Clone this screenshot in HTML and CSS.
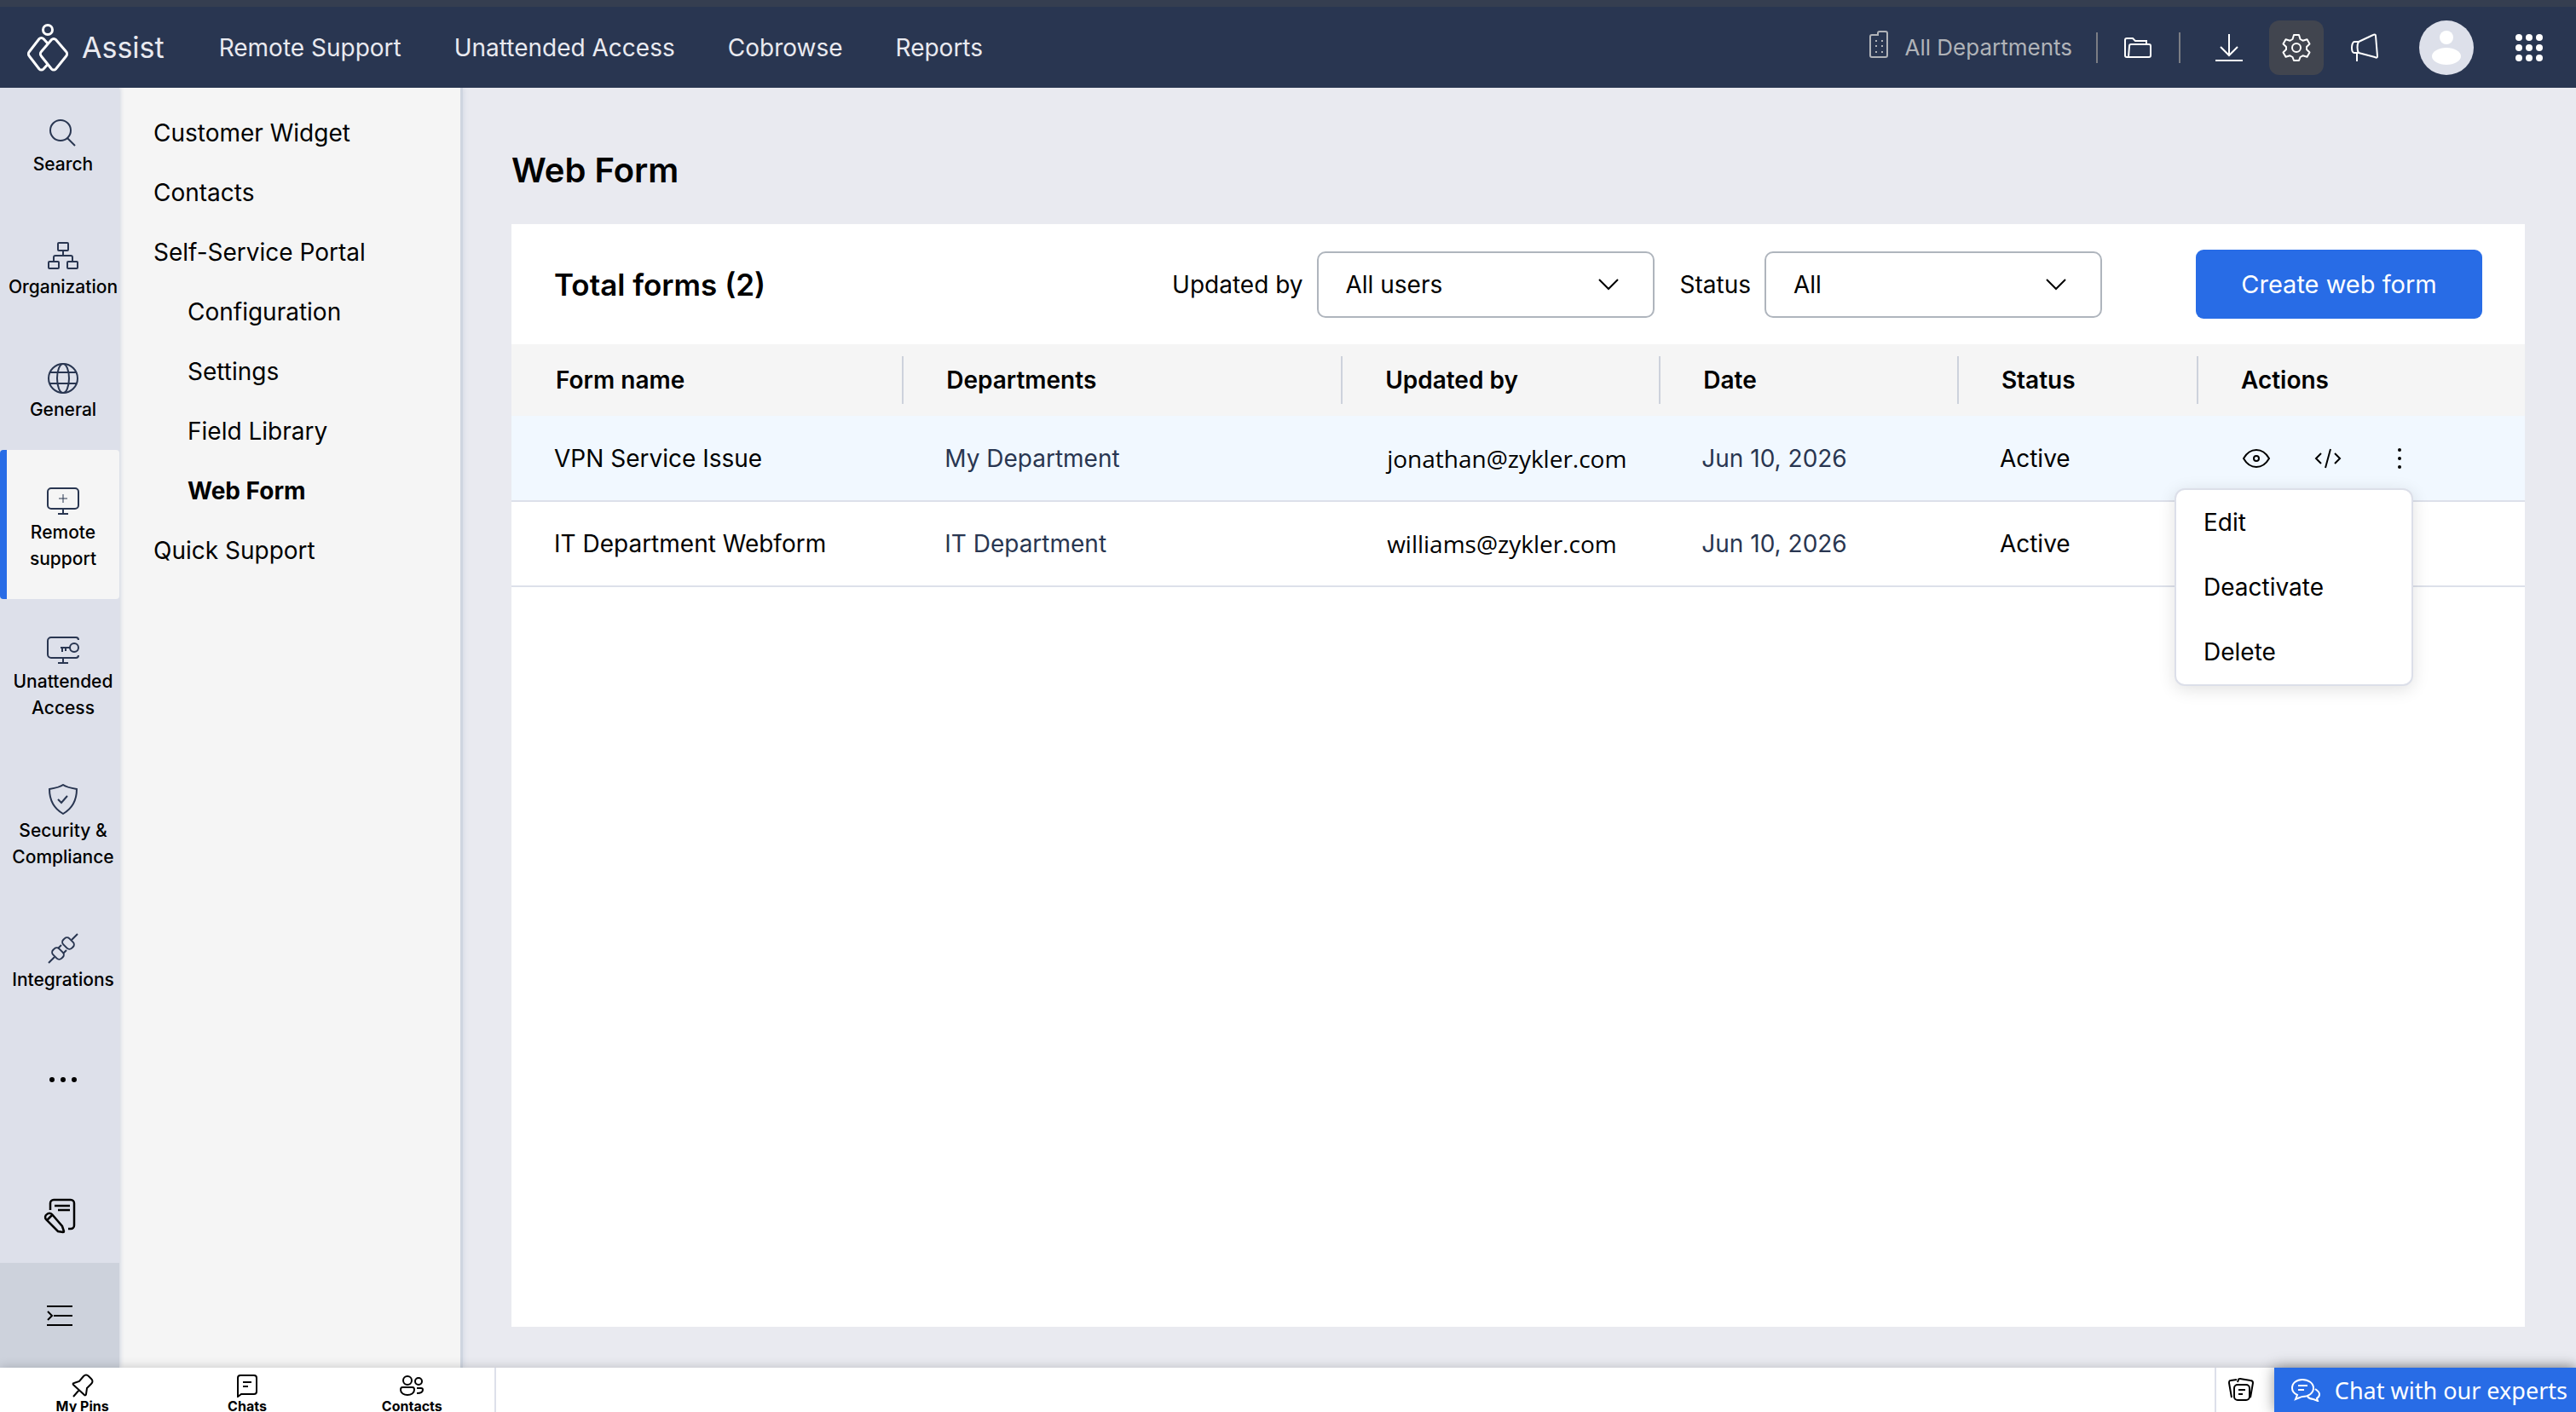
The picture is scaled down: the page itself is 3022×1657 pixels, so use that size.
FILE: index.html
```html
<!DOCTYPE html>
<html lang="en">
<head>
    <meta charset="UTF-8">
    <meta name="viewport" content="width=device-width, initial-scale=1.0">
    <title>Assist - Web Form</title>
    <link rel="stylesheet" href="styles.css">
</head>
<body>
    <!-- Top bar -->
    <header class="top-bar">
        <a class="brand" href="#">
            <svg width="48" height="58" viewBox="0 0 48 58" fill="none" stroke="#fff" stroke-width="3">
                <circle cx="24" cy="8" r="5.500"/>
                <path d="M24 24l-5-5.500a3.500 3.500 0 0 0-5 0L2.500 33.500a4 4 0 0 0 0 5.500L14 54a3.500 3.500 0 0 0 5 0l5-5.500"/>
                <path d="M28.500 19.500a3.500 3.500 0 0 1 5 0L45.500 33.500a4 4 0 0 1 0 5.500L33.500 54a3.500 3.500 0 0 1-5 0L16.500 39a4 4 0 0 1 0-5.500z"/>
            </svg>
            <span>Assist</span>
        </a>
        <nav class="main-nav">
            <a href="#">Remote Support</a>
            <a href="#">Unattended Access</a>
            <a href="#">Cobrowse</a>
            <a href="#">Reports</a>
        </nav>
        <div class="top-tools">
            <button class="dept-button">
                <svg width="24" height="34" viewBox="0 0 24 34" fill="none" stroke="currentColor" stroke-width="2">
                    <path d="M4 6h7V4a2 2 0 0 1 2-2h7a2 2 0 0 1 2 2v26a2 2 0 0 1-2 2H4a2 2 0 0 1-2-2V8a2 2 0 0 1 2-2"/>
                    <path d="M8 13h2M15 13h2M8 19h2M15 19h2M8 26h2M15 26h2"/>
                </svg>
                <span>All Departments</span>
            </button>
            <span class="tool-divider"></span>
            <button class="tool-button folder" aria-label="Files">
                <svg width="34" height="34" viewBox="0 0 34 34" fill="none" stroke="#fff" stroke-width="2">
                    <path d="M6 28H4a2 2 0 0 1-2-2V8a2 2 0 0 1 2-2h7l3 3h13v3"/>
                    <path d="M9 13h21a2 2 0 0 1 2 2v11a2 2 0 0 1-2 2H6l1-13a2 2 0 0 1 2-2z"/>
                </svg>
            </button>
            <span class="tool-divider"></span>
            <button class="tool-button download" aria-label="Download">
                <svg width="34" height="34" viewBox="0 0 34 34" fill="none" stroke="#fff" stroke-width="2">
                    <path d="M17 1v24M7 16l10 10 10-10M1 32h32"/>
                </svg>
            </button>
            <button class="tool-button selected" aria-label="Settings">
                <svg width="34" height="34" viewBox="0 0 34 34" fill="none" stroke="#fff" stroke-width="2" stroke-linejoin="round">
                    <path d="M14 2h6l1.500 5 3 1.700 5-1.500 3 5.300-3.500 3.500v3l3.500 3.500-3 5.300-5-1.500-3 1.700L20 32h-6l-1.500-4-3-1.700-5 1.500-3-5.300L5 19v-3l-3.500-3.500 3-5.300 5 1.500 3-1.700z"/>
                    <circle cx="17" cy="17" r="5"/>
                </svg>
            </button>
            <button class="tool-button" aria-label="Announcements">
                <svg width="34" height="34" viewBox="0 0 34 34" fill="none" stroke="#fff" stroke-width="2" stroke-linejoin="round">
                    <path d="M10 10L27 2c2-1 3 0 3 1l2 24c0 2-1 2-3 1L10 23H5c-2 0-3-3-3-6s1-7 3-7zM10 10c-2 3-2 10 0 13M8 23v10"/>
                </svg>
            </button>
            <button class="avatar" aria-label="Account">
                <svg width="64" height="64" viewBox="0 0 64 64">
                    <circle cx="32" cy="32" r="32" fill="#dde0ea"/>
                    <circle cx="32" cy="20" r="8" fill="#fff"/>
                    <ellipse cx="32" cy="42" rx="17" ry="10" fill="#fff"/>
                </svg>
            </button>
            <button class="apps" aria-label="Apps">
                <svg width="34" height="34" viewBox="0 0 34 34" fill="#fff">
                    <circle cx="5" cy="5" r="4"/><circle cx="17" cy="5" r="4"/><circle cx="29" cy="5" r="4"/>
                    <circle cx="5" cy="17" r="4"/><circle cx="17" cy="17" r="4"/><circle cx="29" cy="17" r="4"/>
                    <circle cx="5" cy="29" r="4"/><circle cx="17" cy="29" r="4"/><circle cx="29" cy="29" r="4"/>
                </svg>
            </button>
        </div>
    </header>

    <div class="workspace">
        <!-- Icon sidebar -->
        <nav class="side-bar">
            <a class="side-item" href="#">
                <svg class="side-icon" viewBox="0 0 36 36"><circle cx="15" cy="15" r="12"/><path d="M23 24l9 9"/></svg>
                <span>Search</span>
            </a>
            <a class="side-item" href="#">
                <svg class="side-icon" viewBox="0 0 36 36"><rect x="12" y="3" width="12" height="9" rx="1"/><rect x="1" y="25" width="12" height="8" rx="1"/><rect x="23" y="25" width="12" height="8" rx="1"/><path d="M18 12v6M7 25v-5a2 2 0 0 1 2-2h18a2 2 0 0 1 2 2v5"/></svg>
                <span>Organization</span>
            </a>
            <a class="side-item" href="#">
                <svg class="side-icon" viewBox="0 0 36 36"><circle cx="18" cy="18" r="17"/><ellipse cx="18" cy="18" rx="7" ry="17"/><path d="M3 11h30M3 24h30"/></svg>
                <span>General</span>
            </a>
            <a class="side-item active" href="#">
                <svg class="side-icon" viewBox="0 0 38 36"><rect x="1" y="3" width="36" height="24" rx="4"/><path d="M19 27v6M13 33h12"/><path d="M14 15h10M19 10v10" stroke-width="1"/></svg>
                <span>Remote<br>support</span>
            </a>
            <a class="side-item" href="#">
                <svg class="side-icon" viewBox="0 0 38 36"><path d="M37 6a3 3 0 0 0-3-3H5a4 4 0 0 0-4 4v16a4 4 0 0 0 4 4h29a3 3 0 0 0 3-3M19 27v6M13 33h12"/><circle cx="32" cy="15" r="5"/><path d="M27 15H16M18 15v5M22 15v4"/></svg>
                <span>Unattended<br>Access</span>
            </a>
            <a class="side-item" href="#">
                <svg class="side-icon" viewBox="0 0 36 36"><path d="M18 1c-4 3-10 4-16 5 0 12 4 22 16 29 12-7 16-17 16-29-6-1-12-2-16-5z"/><path d="M12 18l4 4 7-8"/></svg>
                <span>Security &amp;<br>Compliance</span>
            </a>
            <a class="side-item" href="#">
                <svg class="side-icon" viewBox="0 0 36 36"><path d="M35 1l-7 7M1 35l7-7"/><rect x="19" y="5" width="10" height="14" rx="4" transform="rotate(-45 24 12)"/><rect x="7" y="17" width="10" height="14" rx="4" transform="rotate(-45 12 24)"/><path d="M12 18l4-4M18 24l4-4"/></svg>
                <span>Integrations</span>
            </a>
            <button class="side-more" aria-label="More">
                <svg width="32" height="8" viewBox="0 0 32 8"><circle cx="3" cy="4" r="3"/><circle cx="16" cy="4" r="3"/><circle cx="29" cy="4" r="3"/></svg>
            </button>
            <button class="side-notes" aria-label="Notes">
                <svg width="38" height="42" viewBox="0 0 38 42" fill="none" stroke="#000" stroke-width="2.500">
                    <path d="M8 14V6a4 4 0 0 1 4-4h20a4 4 0 0 1 4 4v26a4 4 0 0 1-4 4h-3M13 9h18M17 14h14"/>
                    <path d="M4 19a4 4 0 0 1 6 0l12 14 2 6a1 1 0 0 1-1 1l-6-1L3 25a4 4 0 0 1 1-6zM4 26l6-6"/>
                </svg>
            </button>
            <button class="side-collapse" aria-label="Expand sidebar">
                <svg width="30" height="26" viewBox="0 0 30 26" fill="none" stroke="#000" stroke-width="2"><path d="M0 2h30M8 13h22M0 24h30M1 8l5 5-5 5"/></svg>
            </button>
        </nav>

        <!-- Section menu -->
        <nav class="sub-menu">
            <a href="#">Customer Widget</a>
            <a href="#">Contacts</a>
            <a href="#">Self-Service Portal</a>
            <a class="nested" href="#">Configuration</a>
            <a class="nested" href="#">Settings</a>
            <a class="nested" href="#">Field Library</a>
            <a class="nested current" href="#">Web Form</a>
            <a href="#">Quick Support</a>
        </nav>

        <main class="content">
            <h1>Web Form</h1>
            <section class="card">
                <div class="card-toolbar">
                    <h2>Total forms (2)</h2>
                    <label for="updated-by">Updated by</label>
                    <div class="select-box">
                        <select id="updated-by"><option>All users</option></select>
                        <svg class="chevron" viewBox="0 0 24 14"><path d="M1 1l11 11L23 1"/></svg>
                    </div>
                    <label for="status">Status</label>
                    <div class="select-box">
                        <select id="status"><option>All</option></select>
                        <svg class="chevron" viewBox="0 0 24 14"><path d="M1 1l11 11L23 1"/></svg>
                    </div>
                    <button class="create-button">Create web form</button>
                </div>

                <table class="forms-table">
                    <colgroup>
                        <col class="col-name"><col class="col-dept"><col class="col-user"><col class="col-date"><col class="col-status"><col>
                    </colgroup>
                    <thead>
                        <tr><th>Form name</th><th>Departments</th><th>Updated by</th><th>Date</th><th>Status</th><th>Actions</th></tr>
                    </thead>
                    <tbody>
                        <tr class="hovered">
                            <td>VPN Service Issue</td>
                            <td class="muted">My Department</td>
                            <td class="email">jonathan@zykler.com</td>
                            <td class="muted">Jun 10, 2026</td>
                            <td>Active</td>
                            <td class="actions-cell">
                                <div class="row-actions">
                                    <button aria-label="Preview">
                                        <svg width="32" height="24" viewBox="0 0 32 24"><path d="M1 12C5 5 10 2 16 2s11 3 15 10c-4 7-9 10-15 10S5 19 1 12z"/><circle cx="16" cy="12" r="3"/></svg>
                                    </button>
                                    <button aria-label="Embed code">
                                        <svg width="32" height="24" viewBox="0 0 32 24"><path d="M8 6l-6 6 6 6M24 6l6 6-6 6M19 1l-6 22"/></svg>
                                    </button>
                                    <button aria-label="More actions">
                                        <svg width="32" height="24" viewBox="0 0 32 24"><g fill="#000" stroke="none"><circle cx="16" cy="2" r="2"/><circle cx="16" cy="12" r="2"/><circle cx="16" cy="22" r="2"/></g></svg>
                                    </button>
                                </div>
                                <div class="action-menu">
                                    <button>Edit</button>
                                    <button>Deactivate</button>
                                    <button>Delete</button>
                                </div>
                            </td>
                        </tr>
                        <tr>
                            <td>IT Department Webform</td>
                            <td class="muted">IT Department</td>
                            <td class="email">williams@zykler.com</td>
                            <td class="muted">Jun 10, 2026</td>
                            <td>Active</td>
                            <td></td>
                        </tr>
                    </tbody>
                </table>
            </section>
        </main>
    </div>

    <!-- Bottom chat bar -->
    <footer class="chat-bar">
        <div class="chat-tabs">
            <button>
                <svg width="26" height="28" viewBox="0 0 26 28"><path d="M14 3c2-2 4-2 6 0l3 3c2 2 2 4 0 6l-5 5-1 7c0 1-1 2-2 1L2 13c-1-1 0-2 1-2l6-2zM9 19l-7 8"/></svg>
                <span>My Pins</span>
            </button>
            <button>
                <svg width="26" height="28" viewBox="0 0 26 28"><path d="M2 27V5a3 3 0 0 1 3-3h16a3 3 0 0 1 3 3v16a3 3 0 0 1-3 3H6zM8 10h10M8 15h6"/></svg>
                <span>Chats</span>
            </button>
            <button>
                <svg width="28" height="28" viewBox="0 0 28 28"><circle cx="9" cy="8" r="5"/><circle cx="22" cy="9" r="4"/><path d="M3 16h12c2 0 2 2 2 3 0 4-4 6-8 6s-8-2-8-6c0-1 0-3 2-3zM20 17h5c2 0 2 1 2 2 0 3-3 4-7 4"/></svg>
                <span>Contacts</span>
            </button>
        </div>
        <button class="chat-notes" aria-label="Sticky notes">
            <svg width="30" height="28" viewBox="0 0 30 28"><rect x="7" y="8" width="18" height="18" rx="4"/><path d="M12 14h8M12 19h5M4 23L1 6c0-2 0-3 2-3l7-1M11 5l1-3c0-1 1-1 2-1l12 2c2 0 3 1 3 3l-3 17"/></svg>
        </button>
        <button class="chat-button">
            <svg width="36" height="28" viewBox="0 0 36 28"><path d="M6 25l2-5C4 18 2 15 2 12 2 6 7 2 14 2s13 4 13 10-6 10-13 10c-1 0-3 1-8 3zM9 9h11M9 14h7M29 13c3 2 5 4 5 6 0 2-1 4-3 5l1 3-5-2c-3 0-5-1-7-3"/></svg>
            <span>Chat with our experts</span>
        </button>
    </footer>
</body>
</html>
```
FILE: styles.css
```css
* {
    box-sizing: border-box;
}
body {
    margin: 0;
    height: 100vh;
    display: flex;
    flex-direction: column;
    overflow: hidden;
    font-family: Inter, "Liberation Sans", sans-serif;
    font-size: 28px;
    color: #000;
    background: #e9eaf0;
}
a {
    color: inherit;
    text-decoration: none;
}
button {
    border: none;
    background: none;
    padding: 0;
    font: inherit;
    color: inherit;
    cursor: pointer;
}
svg {
    display: block;
    flex-shrink: 0;
}

/* Top bar */
.top-bar {
    flex: 0 0 103px;
    display: flex;
    align-items: center;
    padding: 0 38px 0 32px;
    background: #293651;
    border-top: 8px solid #353e50;
    color: #e9eaf0;
    z-index: 2;
}
.brand {
    display: flex;
    align-items: center;
    gap: 16px;
    font-size: 34px;
}
.main-nav {
    display: flex;
    gap: 62px;
    margin-left: 64px;
}
.top-tools {
    display: flex;
    align-items: center;
    margin-left: auto;
}
.dept-button {
    display: flex;
    align-items: center;
    gap: 18px;
    font-size: 26px;
    color: #b0b3b8;
}
.dept-button svg {
    margin-bottom: 8px;
}
.tool-divider {
    width: 2px;
    height: 36px;
    margin-left: 28px;
    background: #7b7d84;
}
.tool-button {
    display: flex;
    align-items: center;
    justify-content: center;
    width: 64px;
    height: 64px;
    margin-left: 16px;
    border-radius: 12px;
}
.folder {
    width: 34px;
    margin-left: 30px;
    margin-right: 3px;
}
.download {
    width: 34px;
    margin-left: 40px;
    margin-right: 14px;
}
.selected {
    background: #41454f;
}
.avatar {
    margin-left: 32px;
}
.apps {
    margin-left: 48px;
}

.workspace {
    flex: 1;
    display: flex;
    min-height: 0;
}

/* Icon sidebar */
.side-bar {
    flex: 0 0 140px;
    display: flex;
    flex-direction: column;
    background: #dde0ea;
    box-shadow: 1px 0 5px #ccd2de;
    z-index: 1;
}
.side-item {
    display: flex;
    flex-direction: column;
    align-items: center;
    gap: 3px;
    padding: 42px 0 32px;
    border-left: 8px solid transparent;
    font-size: 21px;
    font-weight: 500;
    line-height: 31px;
    text-align: center;
}
.side-item:first-child {
    padding-top: 35px;
}
.side-item.active {
    background: #f5f5f5;
    border-color: #286ce6;
    border-radius: 4px;
}
.side-icon {
    width: 38px;
    height: 36px;
    fill: none;
    stroke: #293651;
    stroke-width: 2;
}
.side-more {
    display: flex;
    justify-content: center;
    padding: 66px 0 0 8px;
}
.side-notes {
    display: flex;
    align-items: center;
    justify-content: center;
    height: 110px;
    margin-top: auto;
}
.side-collapse {
    display: flex;
    align-items: center;
    justify-content: center;
    height: 123px;
    background: #cdd2dc;
}

/* Section menu */
.sub-menu {
    flex: 0 0 403px;
    padding-top: 18px;
    background: #f5f5f5;
    border-right: 3px solid #cfd5e0;
    box-shadow: 1px 0 6px #d3d8e3;
}
.sub-menu a {
    display: block;
    padding-left: 40px;
    line-height: 70px;
}
.sub-menu .nested {
    padding-left: 80px;
}
.sub-menu .current {
    font-weight: 700;
}

/* Content */
.content {
    flex: 1;
    display: flex;
    flex-direction: column;
    padding: 66px 60px 48px 57px;
}
h1 {
    margin: 0 0 32px;
    font-size: 40px;
    font-weight: 600;
    line-height: 62px;
}
.card {
    flex: 1;
    background: #fff;
}
.card-toolbar {
    display: flex;
    align-items: center;
    height: 141px;
    padding: 0 50px;
}
.card-toolbar h2 {
    margin: 0 auto 0 0;
    font-size: 35px;
    font-weight: 600;
}
.select-box {
    position: relative;
    width: 396px;
    margin: 0 30px 0 16px;
}
.select-box select {
    appearance: none;
    width: 100%;
    height: 78px;
    padding: 0 32px;
    border: 2px solid #afb5bd;
    border-radius: 10px;
    background: #fff;
    color: #000;
    font: inherit;
}
.chevron {
    position: absolute;
    right: 42px;
    top: 32px;
    width: 24px;
    height: 14px;
    fill: none;
    stroke: #000;
    stroke-width: 2;
    pointer-events: none;
}
.create-button {
    width: 336px;
    height: 81px;
    margin-left: 80px;
    border-radius: 9px;
    background: #286ce6;
    color: #fff;
    font-size: 29px;
}

/* Forms table */
.forms-table {
    width: 100%;
    border-collapse: collapse;
    table-layout: fixed;
}
.col-name { width: 19.4%; }
.col-dept { width: 21.8%; }
.col-user { width: 15.8%; }
.col-date { width: 14.8%; }
.col-status { width: 11.9%; }
.forms-table th {
    height: 84px;
    padding: 0 0 0 52px;
    font-weight: 600;
    text-align: left;
    background: #f5f5f5 linear-gradient(#cdd2dc, #cdd2dc) no-repeat left center / 2px 56px;
}
.forms-table th:first-child {
    background: #f5f5f5;
}
.forms-table td {
    height: 100px;
    padding: 0 0 0 50px;
    border-bottom: 2px solid #dde0ea;
}
.forms-table .hovered {
    background: #f1f8ff;
}
.forms-table .muted {
    color: #293651;
}
.forms-table .email {
    padding-left: 54px;
    font-family: "Open Sans", sans-serif;
}
.forms-table .actions-cell {
    position: relative;
    padding-left: 54px;
}
.row-actions {
    display: flex;
    gap: 52px;
}
.row-actions svg {
    fill: none;
    stroke: #000;
    stroke-width: 2;
}
.action-menu {
    position: absolute;
    top: 85px;
    right: 131px;
    z-index: 2;
    width: 280px;
    border: 2px solid #dcdfe9;
    border-radius: 12px;
    background: #fff;
    box-shadow: 0 4px 20px rgba(0, 0, 0, 0.12);
}
.action-menu button {
    display: block;
    width: 100%;
    padding-left: 32px;
    line-height: 76px;
    text-align: left;
}

/* Bottom chat bar */
.chat-bar {
    flex: 0 0 52px;
    display: flex;
    min-height: 0;
    background: #fff;
    box-shadow: 0 0 12px rgba(0, 0, 0, 0.2);
    z-index: 3;
}
.chat-bar svg {
    fill: none;
    stroke: #000;
    stroke-width: 2;
}
.chat-tabs {
    display: flex;
    width: 582px;
    border-right: 2px solid #dde0ea;
}
.chat-tabs button {
    flex: 1;
    display: flex;
    flex-direction: column;
    align-items: center;
    justify-content: flex-start;
    padding-top: 7px;
    font-size: 16px;
    font-weight: 700;
    line-height: 20px;
}
.chat-notes {
    display: flex;
    align-items: center;
    margin-left: auto;
    padding: 0 24px 0 14px;
    border-left: 2px solid #dde0ea;
}
.chat-button {
    display: flex;
    align-items: center;
    gap: 16px;
    padding: 0 10px 0 19px;
    background: #286ce6;
    color: #fff;
    font-family: "Noto Sans", sans-serif;
    font-size: 27px;
    box-shadow: 0 0 16px rgba(0, 0, 0, 0.4);
}
.chat-bar .chat-button svg {
    stroke: #fff;
}
```
